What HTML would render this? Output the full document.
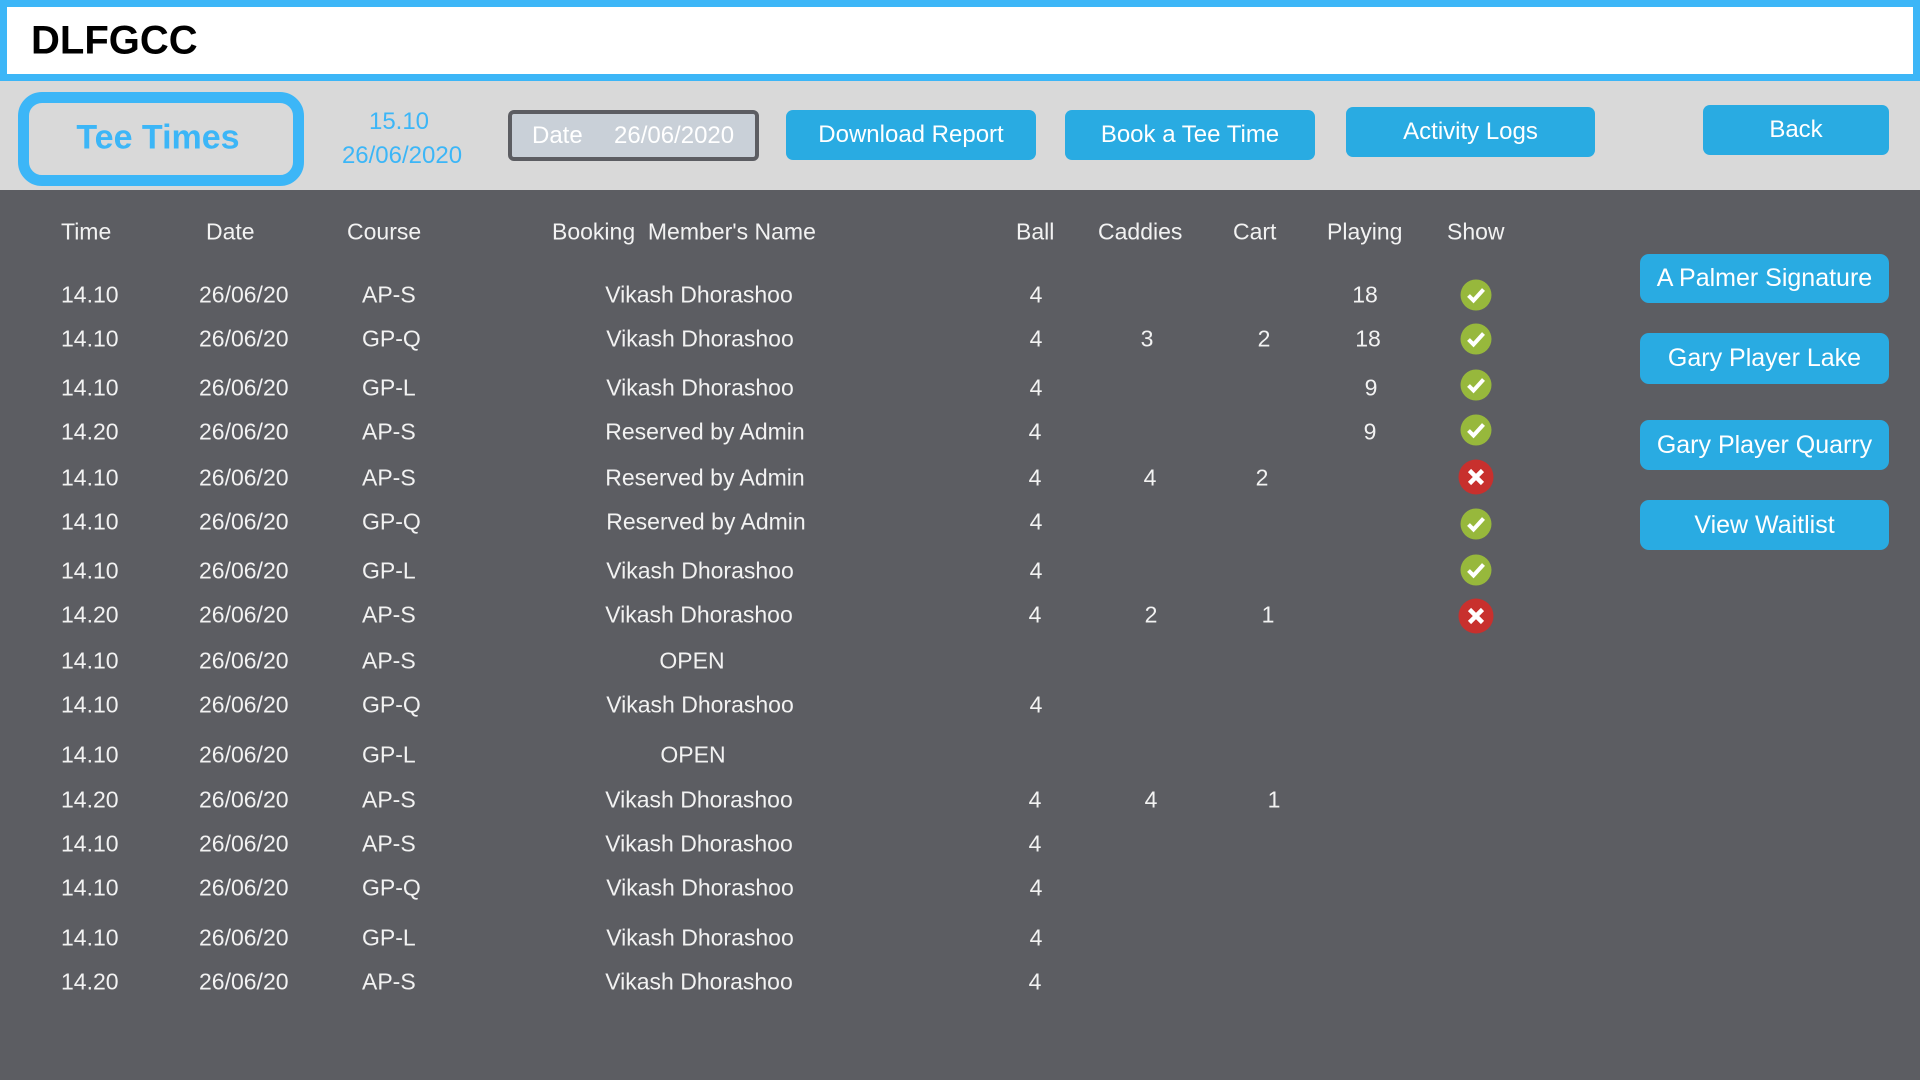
<!DOCTYPE html>
<html><head><meta charset="utf-8"><style>
*{margin:0;padding:0;box-sizing:border-box}
body{width:1920px;height:1080px;overflow:hidden;background:#5c5d62;font-family:"Liberation Sans",sans-serif;position:relative;color:#f2f2f2}
.a{position:absolute}
.c{position:absolute;transform:translate(-50%,-50%);white-space:nowrap}
.l{position:absolute;transform:translateY(-50%);white-space:nowrap}
.btn{position:absolute;background:#29abe2;color:#fff;border-radius:7px;display:flex;align-items:center;justify-content:center;font-size:24px}
.rb{font-size:25px;border-radius:9px}
.t{font-size:23px}
.ic{position:absolute;width:31px;height:31px;border-radius:50%;transform:translate(-50%,-50%)}
</style></head><body>
<div class="a" style="left:0;top:0;width:1920px;height:81px;background:#3cb6f7"></div>
<div class="a" style="left:7px;top:7px;width:1906px;height:67px;background:#fff"></div>
<div class="l" style="left:31px;top:41px;font-size:40px;font-weight:bold;color:#000">DLFGCC</div>
<div class="a" style="left:0;top:81px;width:1920px;height:109px;background:#d9d9d9"></div>
<div class="a" style="left:18px;top:92px;width:286px;height:94px;border:11px solid #3cb6f7;border-radius:24px;background:#d9d9d9"></div>
<div class="c" style="left:158px;top:138px;font-size:34px;font-weight:bold;color:#3cb6f7">Tee Times</div>
<div class="c" style="left:399px;top:122px;font-size:24px;color:#3cb6f7">15.10</div>
<div class="c" style="left:402px;top:156px;font-size:24px;color:#3cb6f7">26/06/2020</div>
<div class="a" style="left:508px;top:110px;width:251px;height:51px;border:4px solid #5c5d62;border-radius:6px;background:#c9d0d8"></div>
<div class="l" style="left:532px;top:136px;font-size:24px;color:#fff">Date</div>
<div class="l" style="left:614px;top:136px;font-size:24px;color:#fff">26/06/2020</div>
<div class="btn" style="left:786px;top:110px;width:250px;height:50px">Download Report</div>
<div class="btn" style="left:1065px;top:110px;width:250px;height:50px">Book a Tee Time</div>
<div class="btn" style="left:1346px;top:107px;width:249px;height:50px">Activity Logs</div>
<div class="btn" style="left:1703px;top:105px;width:186px;height:50px">Back</div>
<div class="btn rb" style="left:1640px;top:254px;width:249px;height:49px">A Palmer Signature</div>
<div class="btn rb" style="left:1640px;top:333px;width:249px;height:51px">Gary Player Lake</div>
<div class="btn rb" style="left:1640px;top:420px;width:249px;height:50px">Gary Player Quarry</div>
<div class="btn rb" style="left:1640px;top:500px;width:249px;height:50px">View Waitlist</div>
<div class="t">
<div class="l" style="left:61px;top:232px">Time</div>
<div class="l" style="left:206px;top:232px">Date</div>
<div class="l" style="left:347px;top:232px">Course</div>
<div class="l" style="left:552px;top:232px">Booking&nbsp; Member's Name</div>
<div class="l" style="left:1016px;top:232px">Ball</div>
<div class="l" style="left:1098px;top:232px">Caddies</div>
<div class="l" style="left:1233px;top:232px">Cart</div>
<div class="l" style="left:1327px;top:232px">Playing</div>
<div class="l" style="left:1447px;top:232px">Show</div>
</div>
<div class="t" id="rows"></div>
<div class="t">
<!-- rows -->
<div class="l" style="left:61px;top:295px">14.10</div><div class="l" style="left:199px;top:295px">26/06/20</div><div class="l" style="left:362px;top:295px">AP-S</div><div class="c" style="left:699px;top:295px">Vikash Dhorashoo</div><div class="c" style="left:1036px;top:295px">4</div><div class="c" style="left:1365px;top:295px">18</div><div class="ic" style="left:1476px;top:295px;background:#97b83c"><svg width="31" height="31" viewBox="0 0 31 31"><path d="M8 16l5 5 10-11" fill="none" stroke="#fff" stroke-width="4"/></svg></div>
<div class="l" style="left:61px;top:339px">14.10</div><div class="l" style="left:199px;top:339px">26/06/20</div><div class="l" style="left:362px;top:339px">GP-Q</div><div class="c" style="left:700px;top:339px">Vikash Dhorashoo</div><div class="c" style="left:1036px;top:339px">4</div><div class="c" style="left:1147px;top:339px">3</div><div class="c" style="left:1264px;top:339px">2</div><div class="c" style="left:1368px;top:339px">18</div><div class="ic" style="left:1476px;top:339px;background:#97b83c"><svg width="31" height="31" viewBox="0 0 31 31"><path d="M8 16l5 5 10-11" fill="none" stroke="#fff" stroke-width="4"/></svg></div>
<div class="l" style="left:61px;top:388px">14.10</div><div class="l" style="left:199px;top:388px">26/06/20</div><div class="l" style="left:362px;top:388px">GP-L</div><div class="c" style="left:700px;top:388px">Vikash Dhorashoo</div><div class="c" style="left:1036px;top:388px">4</div><div class="c" style="left:1371px;top:388px">9</div><div class="ic" style="left:1476px;top:385px;background:#97b83c"><svg width="31" height="31" viewBox="0 0 31 31"><path d="M8 16l5 5 10-11" fill="none" stroke="#fff" stroke-width="4"/></svg></div>
<div class="l" style="left:61px;top:432px">14.20</div><div class="l" style="left:199px;top:432px">26/06/20</div><div class="l" style="left:362px;top:432px">AP-S</div><div class="c" style="left:705px;top:432px">Reserved by Admin</div><div class="c" style="left:1035px;top:432px">4</div><div class="c" style="left:1370px;top:432px">9</div><div class="ic" style="left:1476px;top:430px;background:#97b83c"><svg width="31" height="31" viewBox="0 0 31 31"><path d="M8 16l5 5 10-11" fill="none" stroke="#fff" stroke-width="4"/></svg></div>
<div class="l" style="left:61px;top:478px">14.10</div><div class="l" style="left:199px;top:478px">26/06/20</div><div class="l" style="left:362px;top:478px">AP-S</div><div class="c" style="left:705px;top:478px">Reserved by Admin</div><div class="c" style="left:1035px;top:478px">4</div><div class="c" style="left:1150px;top:478px">4</div><div class="c" style="left:1262px;top:478px">2</div><div class="ic" style="left:1476px;top:477px;width:35px;height:35px;background:#c8302d"><svg width="35" height="35" viewBox="0 0 35 35"><path d="M11 11l13 13M24 11L11 24" fill="none" stroke="#fff" stroke-width="4.5"/></svg></div>
<div class="l" style="left:61px;top:522px">14.10</div><div class="l" style="left:199px;top:522px">26/06/20</div><div class="l" style="left:362px;top:522px">GP-Q</div><div class="c" style="left:706px;top:522px">Reserved by Admin</div><div class="c" style="left:1036px;top:522px">4</div><div class="ic" style="left:1476px;top:524px;background:#97b83c"><svg width="31" height="31" viewBox="0 0 31 31"><path d="M8 16l5 5 10-11" fill="none" stroke="#fff" stroke-width="4"/></svg></div>
<div class="l" style="left:61px;top:571px">14.10</div><div class="l" style="left:199px;top:571px">26/06/20</div><div class="l" style="left:362px;top:571px">GP-L</div><div class="c" style="left:700px;top:571px">Vikash Dhorashoo</div><div class="c" style="left:1036px;top:571px">4</div><div class="ic" style="left:1476px;top:570px;background:#97b83c"><svg width="31" height="31" viewBox="0 0 31 31"><path d="M8 16l5 5 10-11" fill="none" stroke="#fff" stroke-width="4"/></svg></div>
<div class="l" style="left:61px;top:615px">14.20</div><div class="l" style="left:199px;top:615px">26/06/20</div><div class="l" style="left:362px;top:615px">AP-S</div><div class="c" style="left:699px;top:615px">Vikash Dhorashoo</div><div class="c" style="left:1035px;top:615px">4</div><div class="c" style="left:1151px;top:615px">2</div><div class="c" style="left:1268px;top:615px">1</div><div class="ic" style="left:1476px;top:616px;width:35px;height:35px;background:#c8302d"><svg width="35" height="35" viewBox="0 0 35 35"><path d="M11 11l13 13M24 11L11 24" fill="none" stroke="#fff" stroke-width="4.5"/></svg></div>
<div class="l" style="left:61px;top:661px">14.10</div><div class="l" style="left:199px;top:661px">26/06/20</div><div class="l" style="left:362px;top:661px">AP-S</div><div class="c" style="left:692px;top:661px">OPEN</div>
<div class="l" style="left:61px;top:705px">14.10</div><div class="l" style="left:199px;top:705px">26/06/20</div><div class="l" style="left:362px;top:705px">GP-Q</div><div class="c" style="left:700px;top:705px">Vikash Dhorashoo</div><div class="c" style="left:1036px;top:705px">4</div>
<div class="l" style="left:61px;top:755px">14.10</div><div class="l" style="left:199px;top:755px">26/06/20</div><div class="l" style="left:362px;top:755px">GP-L</div><div class="c" style="left:693px;top:755px">OPEN</div>
<div class="l" style="left:61px;top:800px">14.20</div><div class="l" style="left:199px;top:800px">26/06/20</div><div class="l" style="left:362px;top:800px">AP-S</div><div class="c" style="left:699px;top:800px">Vikash Dhorashoo</div><div class="c" style="left:1035px;top:800px">4</div><div class="c" style="left:1151px;top:800px">4</div><div class="c" style="left:1274px;top:800px">1</div>
<div class="l" style="left:61px;top:844px">14.10</div><div class="l" style="left:199px;top:844px">26/06/20</div><div class="l" style="left:362px;top:844px">AP-S</div><div class="c" style="left:699px;top:844px">Vikash Dhorashoo</div><div class="c" style="left:1035px;top:844px">4</div>
<div class="l" style="left:61px;top:888px">14.10</div><div class="l" style="left:199px;top:888px">26/06/20</div><div class="l" style="left:362px;top:888px">GP-Q</div><div class="c" style="left:700px;top:888px">Vikash Dhorashoo</div><div class="c" style="left:1036px;top:888px">4</div>
<div class="l" style="left:61px;top:938px">14.10</div><div class="l" style="left:199px;top:938px">26/06/20</div><div class="l" style="left:362px;top:938px">GP-L</div><div class="c" style="left:700px;top:938px">Vikash Dhorashoo</div><div class="c" style="left:1036px;top:938px">4</div>
<div class="l" style="left:61px;top:982px">14.20</div><div class="l" style="left:199px;top:982px">26/06/20</div><div class="l" style="left:362px;top:982px">AP-S</div><div class="c" style="left:699px;top:982px">Vikash Dhorashoo</div><div class="c" style="left:1035px;top:982px">4</div>
</div>
</body></html>
